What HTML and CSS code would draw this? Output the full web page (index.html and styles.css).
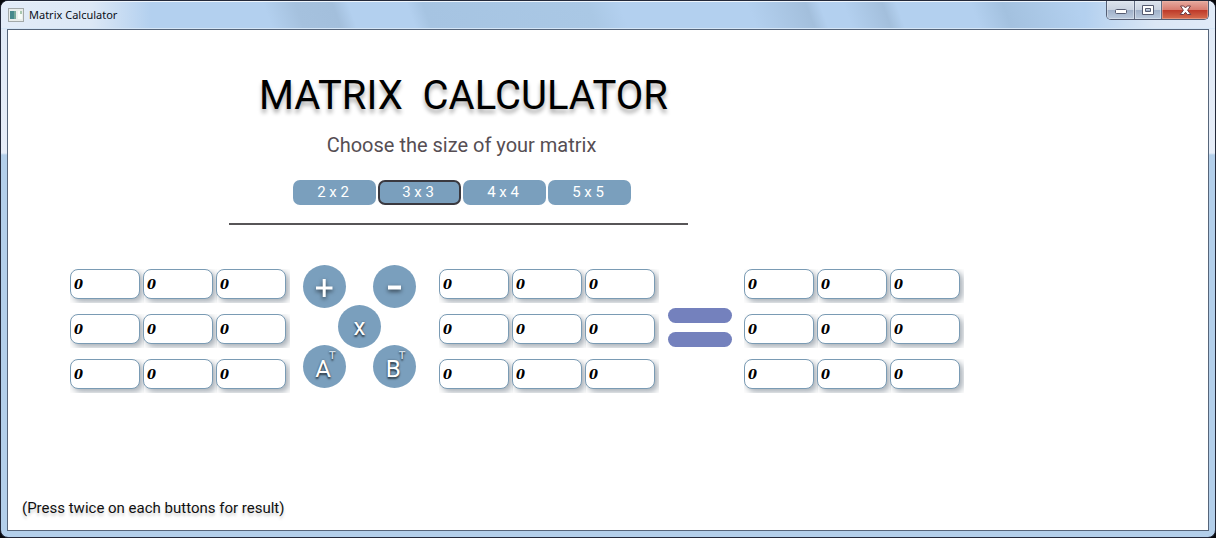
FILE: index.html
```html
<!DOCTYPE html>
<html lang="en">
<head>
<meta charset="utf-8">
<title>Matrix Calculator</title>
<link rel="stylesheet" href="styles.css">
</head>
<body>
<div class="window">
  <div class="titlebar">
    <svg class="app-icon" width="16" height="14" viewBox="0 0 16 14" aria-hidden="true">
      <rect x="0.5" y="0.5" width="15" height="13" fill="#e9edeb" stroke="#a3a9a9"/>
      <rect x="2" y="3" width="6" height="8" fill="#47898c"/>
      <rect x="6" y="3" width="2" height="8" fill="#78aa9b"/>
      <rect x="10" y="3" width="4" height="8" fill="#f6fbf7"/>
      <rect x="12" y="3" width="2" height="3" fill="#a9c8b0"/>
    </svg>
    <span class="window-title">Matrix Calculator</span>
    <div class="window-controls">
      <button type="button" class="control minimize" aria-label="Minimize">
        <svg width="14" height="10" viewBox="0 0 14 10"><rect x="1.5" y="4.5" width="11" height="4" rx="1" fill="#fff" stroke="#555b70"/></svg>
      </button>
      <button type="button" class="control maximize" aria-label="Maximize">
        <svg width="12" height="10" viewBox="0 0 12 10"><path d="M.5.5h11v9H.5zM3.500 3.500v3h5v-3z" fill="#fff" fill-rule="evenodd" stroke="#555b70"/></svg>
      </button>
      <button type="button" class="control close" aria-label="Close">
        <svg width="13" height="11" viewBox="0 0 13 11"><path d="M1.500 1h3.300l1.700 2 1.700-2h3.300L8.600 5.300l3.200 4.200H8.300L6.500 7.300 4.700 9.500H1.200l3.200-4.200z" fill="#fff" stroke="#6c3b42" stroke-width="1"/></svg>
      </button>
    </div>
  </div>
  <main class="client">
    <header class="intro">
      <h1 class="title">MATRIX  CALCULATOR</h1>
      <p class="subtitle">Choose the size of your matrix</p>
      <div class="sizes">
        <button type="button" class="size">2 x 2</button>
        <button type="button" class="size selected" aria-pressed="true">3 x 3</button>
        <button type="button" class="size">4 x 4</button>
        <button type="button" class="size">5 x 5</button>
      </div>
    </header>
    <div class="equation">
      <div class="matrix">
        <input class="cell" aria-label="A 1,1" value="0"><input class="cell" aria-label="A 1,2" value="0"><input class="cell" aria-label="A 1,3" value="0">
        <input class="cell" aria-label="A 2,1" value="0"><input class="cell" aria-label="A 2,2" value="0"><input class="cell" aria-label="A 2,3" value="0">
        <input class="cell" aria-label="A 3,1" value="0"><input class="cell" aria-label="A 3,2" value="0"><input class="cell" aria-label="A 3,3" value="0">
      </div>
      <div class="operators">
        <button type="button" class="op" aria-label="Add"><svg width="43" height="43" viewBox="0 0 43 43"><path d="M19.700 14h3v7.500h6.800v3h-6.800V32h-3v-7.500H13v-3h6.700z" fill="#fff"/></svg></button>
        <button type="button" class="op" aria-label="Subtract"><svg width="43" height="43" viewBox="0 0 43 43"><path d="M15 20.500h13v4H15z" fill="#fff"/></svg></button>
        <button type="button" class="op multiply">x</button>
        <button type="button" class="op letter">A<sup class="power">T</sup></button>
        <button type="button" class="op letter">B<sup class="power">T</sup></button>
      </div>
      <div class="matrix">
        <input class="cell" aria-label="B 1,1" value="0"><input class="cell" aria-label="B 1,2" value="0"><input class="cell" aria-label="B 1,3" value="0">
        <input class="cell" aria-label="B 2,1" value="0"><input class="cell" aria-label="B 2,2" value="0"><input class="cell" aria-label="B 2,3" value="0">
        <input class="cell" aria-label="B 3,1" value="0"><input class="cell" aria-label="B 3,2" value="0"><input class="cell" aria-label="B 3,3" value="0">
      </div>
      <div class="equals" role="img" aria-label="equals"><span class="bar"></span><span class="bar"></span></div>
      <div class="matrix">
        <input class="cell" aria-label="Result 1,1" value="0" readonly><input class="cell" aria-label="Result 1,2" value="0" readonly><input class="cell" aria-label="Result 1,3" value="0" readonly>
        <input class="cell" aria-label="Result 2,1" value="0" readonly><input class="cell" aria-label="Result 2,2" value="0" readonly><input class="cell" aria-label="Result 2,3" value="0" readonly>
        <input class="cell" aria-label="Result 3,1" value="0" readonly><input class="cell" aria-label="Result 3,2" value="0" readonly><input class="cell" aria-label="Result 3,3" value="0" readonly>
      </div>
    </div>
    <p class="hint">(Press twice on each buttons for result)</p>
  </main>
</div>
</body>
</html>
```
FILE: styles.css
```css
* { box-sizing: border-box; }
body {
  margin: 0;
  background: #07080c;
  font-family: Roboto, "Liberation Sans", sans-serif;
}
button { font-family: inherit; padding: 0; border: 0; }
svg { display: block; }

.window {
  display: flex;
  flex-direction: column;
  min-height: 100vh;
  padding: 0 6px 6px;
  border: 1px solid #23293a;
  border-radius: 8px;
  background: linear-gradient(#dfe9f6 0, #e6edf8 152px, #b3cfea 154px, #b3cfea);
  box-shadow: inset 0 1px #eef5fc;
}
.titlebar {
  display: flex;
  align-items: center;
  height: 28px;
  margin: 0 -6px;
  padding-left: 7px;
  border-radius: 7px 7px 0 0;
  box-shadow: inset 0 1px #eef5fc, inset 0 -1px #d5e6f7;
  background:
    linear-gradient(90deg, #e3ecf8 0, #dce8f6 90px, #dce8f600 150px),
    linear-gradient(270deg, #e1ebf8 0, #dbe7f5 60px, #dbe7f500 130px),
    linear-gradient(70deg, #b3d0ef 255px, #a5c1de 285px, #a3bfdc 320px, #b3d0ef 335px, #b3d0ef 390px, #a6c4e2 405px, #aac8e5 560px, #b3d0ef 590px, #b3d0ef 710px, #a3bfdc 765px, #b3d0ef 778px, #b3d0ef 800px, #a3bfdc 837px, #b3d0ef 850px, #b3d0ef 920px, #a3c1df 950px, #b3d0ef 1020px);
}
.window-title {
  margin-left: 5px;
  font: 11px/16px "Noto Sans", "Open Sans", sans-serif;
  color: #0b0f18;
}
.window-controls {
  display: flex;
  align-self: flex-start;
  margin-left: auto;
  margin-right: 6px;
  border: 1px solid #545e74;
  border-top: 0;
  border-radius: 0 0 5px 5px;
  overflow: hidden;
}
.control {
  display: flex;
  align-items: center;
  justify-content: center;
  width: 28px;
  height: 18px;
  border-right: 1px solid #626c82;
  background: linear-gradient(#dce3ed 0, #c9d2e0 50%, #9fb0c8 50%, #bccbde);
  box-shadow: inset 0 0 0 1px #e8eef680;
}
.maximize { width: 27px; }
.close {
  width: 46px;
  border: 0;
  background: linear-gradient(#e6aaa0 0, #d97d70 48%, #bd3828 50%, #d66e50);
  box-shadow: inset 0 0 0 1px #f0b9aa80;
}

.client {
  display: flex;
  flex: 1;
  flex-direction: column;
  padding: 41px 24px 10px 14px;
  border: 1px solid #56657a;
  background: #fff;
}
.intro {
  display: flex;
  flex-direction: column;
  align-items: center;
  width: 459px;
  margin-left: 207px;
  padding-bottom: 18px;
  border-bottom: 2px solid #575557;
}
.title {
  margin: 0 0 0 10px;
  font-weight: 400;
  font-size: 40px;
  line-height: 50px;
  color: #000;
  text-shadow: 0 4px 4px #0005;
  white-space: pre;
}
.subtitle {
  margin: 11px 0 22px 6px;
  font-size: 20px;
  line-height: 26px;
  color: #564e53;
}
.sizes { display: flex; gap: 2px; margin-left: 6px; }
.size {
  width: 83px;
  height: 25px;
  padding: 0 2px 1px 0;
  border-radius: 7px;
  background: #7a9fbd;
  color: #fff;
  font-size: 15px;
}
.selected { border: 2px solid #3a3940; }

.equation {
  display: flex;
  align-items: flex-start;
  margin: 40px 0 0 48px;
}
.matrix {
  display: grid;
  grid-template-columns: repeat(3, 70px);
  gap: 15px 3px;
  margin-top: 4px;
}
.cell {
  width: 70px;
  height: 30px;
  padding: 0 3px;
  border: 1px solid #7a9bb4;
  border-radius: 8px;
  background: #fff;
  color: #000;
  font: italic bold 13px "DejaVu Serif", serif;
  box-shadow: 3px 3px 6px #4b5b6b80;
  clip-path: inset(0 -4px -4px 0);
}
.operators {
  display: grid;
  grid-template-columns: 43px 43px;
  grid-template-rows: 40px 40px 43px;
  column-gap: 27px;
  margin: 0 23px 0 17px;
}
.op {
  display: flex;
  align-items: center;
  justify-content: center;
  width: 43px;
  height: 43px;
  border-radius: 50%;
  background: #7a9fbd;
  color: #fff;
  font-size: 24px;
  line-height: 28px;
  text-shadow: 0 2px 2px #0009, 0 0 2px #0006;
}
.op svg { filter: drop-shadow(0 2px 2px #0009); }
.multiply { grid-column: 1 / 3; justify-self: center; }
.letter { padding: 5px 1px 0 0; }
.power {
  align-self: flex-start;
  margin-right: -3px;
  margin-left: -2px;
  font-weight: 500;
  font-size: 11px;
  line-height: 12px;
  color: #d3dfe8;
}
.equals {
  display: grid;
  gap: 9px;
  align-self: center;
  margin: 0 12px 0 13px;
}
.bar {
  width: 64px;
  height: 15px;
  border-radius: 8px;
  background: #7481bd;
}
.hint {
  margin: auto 0 0;
  font-size: 15px;
  line-height: 24px;
  color: #111;
  text-shadow: 0 3px 3px #0003;
}
```
